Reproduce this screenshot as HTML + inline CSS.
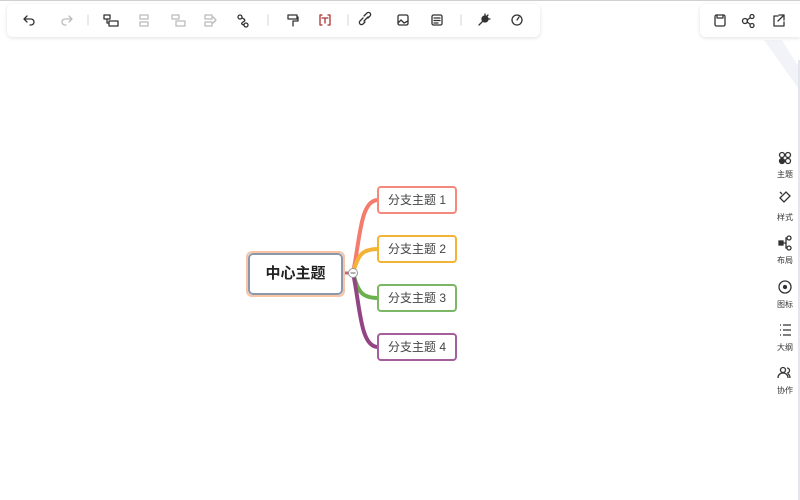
<!DOCTYPE html>
<html><head><meta charset="utf-8"><style>
body{margin:0;width:800px;height:500px;background:#fff;position:relative;overflow:hidden;font-family:"Liberation Sans","Noto Sans CJK SC",sans-serif}
.top{position:absolute;left:0;top:0;width:800px;height:1px;background:#d0d0d0}
.tb{position:absolute;top:4px;height:33px;background:#fff;border-radius:6px;box-shadow:0 1px 4px rgba(0,0,0,.12)}
.node{position:absolute;box-sizing:border-box;background:#fff;border-radius:4px;border:2px solid;font-size:12px;color:#444;text-align:center;line-height:24px;width:80px;height:28px;left:377px}
.side{position:absolute;left:772px;width:26px;text-align:center;font-size:8px;color:#333}
</style></head><body>
<div class="top"></div>
<div style="position:absolute;left:798px;top:60px;width:2px;height:440px;background:#e4e6ee"></div>
<svg style="position:absolute;left:740px;top:36px" width="60" height="60"><path d="M24 4 L58 52 L58 30 L42 4Z" fill="#f2f3f8"/></svg>
<div class="tb" style="left:7px;width:533px">
<svg width="533" height="33" fill="none" stroke="#333" stroke-width="1.3" stroke-linecap="round" stroke-linejoin="round">
<path d="M20 12 L17 15 L20 18 M17 15 H24 a3 3 0 0 1 0 6 H23"/>
<g stroke="#bbb"><path d="M62 12 L65 15 L62 18 M65 15 H58 a3 3 0 0 0 0 6 H59"/></g>
<path d="M81 11v10" stroke="#ddd"/>
<rect x="97" y="11" width="6" height="4"/><rect x="102" y="17" width="9" height="5"/><path d="M100 15v4h2"/>
<g stroke="#bbb"><rect x="133" y="11" width="8" height="4"/><rect x="133" y="18" width="8" height="4"/>
<rect x="165" y="11" width="7" height="4"/><rect x="169" y="17" width="9" height="5"/>
<rect x="198" y="11" width="7" height="4"/><rect x="198" y="18" width="7" height="4"/><path d="M206 13l3 3-3 3"/></g>
<circle cx="233" cy="13" r="2"/><circle cx="239" cy="21" r="2"/><path d="M235 14 Q240 16 236 18 Q233 20 237 21"/>
<path d="M261 11v10" stroke="#ddd"/>
<rect x="281" y="11" width="9" height="4"/><path d="M290 13h1v4h-5v5"/>
<path d="M315 11h-2v10h2 M321 11h2v10h-2 M315 14h6 M318 14v5" stroke="#a33"/>
<path d="M341 11v10" stroke="#ddd"/>
<path d="M358 18l-2 2a2 2 0 0 1-3-3l3-3 M361 14l2-2a2 2 0 0 0-3-3l-3 3 M357 17l4-4"/>
<rect x="391" y="11" width="10" height="10" rx="1.5"/><path d="M391 19l3-3 3 3 4-2"/>
<rect x="425" y="11" width="10" height="10" rx="1.5"/><path d="M427 14h6M427 16.5h6M427 19h4"/>
<path d="M454 11v10" stroke="#ddd"/>
<path d="M472 21l4-4" /><circle cx="478" cy="15" r="3" fill="#333"/><path d="M478 10v2M483 15h-2M481 11l-1 1"/>
<circle cx="510" cy="16" r="5"/><path d="M510 16l2-3"/>
</svg></div>
<div class="tb" style="left:700px;width:100px;border-radius:6px 0 0 6px">
<svg width="100" height="33" fill="none" stroke="#333" stroke-width="1.3" stroke-linecap="round" stroke-linejoin="round">
<rect x="15" y="11" width="10" height="11" rx="1.5"/><path d="M17 11v3h6v-3"/>
<circle cx="45" cy="17" r="2.5"/><circle cx="52" cy="12.5" r="2"/><circle cx="52" cy="21.5" r="2"/><path d="M47 16l3-2M47 18l3 2"/>
<path d="M78 12h-4v10h10v-4 M79 11h5v5 M84 11l-6 6"/>
</svg></div>

<svg style="position:absolute;left:0;top:0" width="800" height="500" fill="none">
<path d="M345 273H352" stroke="#c8628a" stroke-width="3"/>
<path d="M353 273 C360 240 360 200 378 200" stroke="#f47c6c" stroke-width="4"/>
<path d="M353 273 C358 255 362 249 378 249" stroke="#f5b335" stroke-width="4"/>
<path d="M353 273 C358 292 362 298 378 298" stroke="#6ab04c" stroke-width="4"/>
<path d="M353 273 C360 305 360 347 378 347" stroke="#934485" stroke-width="4"/>
<circle cx="353" cy="273" r="4.5" fill="#fff" stroke="#999" stroke-width="1"/><path d="M350.5 273h5" stroke="#666"/>
</svg>
<div style="position:absolute;left:246px;top:251px;width:99px;height:46px;box-sizing:border-box;border:2px solid #f9c3a4;border-radius:6px"></div>
<div style="position:absolute;left:248px;top:253px;width:95px;height:42px;box-sizing:border-box;border:2px solid #8a97ad;border-radius:5px;text-align:center;line-height:38px;font-size:15px;font-weight:bold;color:#222">中心主题</div>
<div class="node" style="top:186px;border-color:#f58a7c">分支主题 1</div>
<div class="node" style="top:235px;border-color:#f5b335">分支主题 2</div>
<div class="node" style="top:284px;border-color:#7bb765">分支主题 3</div>
<div class="node" style="top:333px;border-color:#a45f9c">分支主题 4</div>

<svg style="position:absolute;left:772px;top:148px" width="26" height="240" fill="none" stroke="#333" stroke-width="1.3">
<circle cx="10" cy="7" r="2.5"/><circle cx="16" cy="7" r="2.5"/><circle cx="10" cy="13" r="2.5" fill="#333"/><circle cx="16" cy="13" r="2.5"/>
<path d="M8 50l6-6 4 4-6 6z M10 46l-2-2"/>
<rect x="7" y="93" width="4" height="4" fill="#333"/><circle cx="17" cy="90" r="2"/><circle cx="17" cy="100" r="2"/><path d="M11 95h3v-5h1M14 95v5h1"/>
<circle cx="13" cy="139" r="6"/><circle cx="13" cy="139" r="1.5" fill="#333"/>
<path d="M11 177h8M11 182h8M11 187h8M8 177h1M8 182h1M8 187h1"/>
<circle cx="11" cy="222" r="2.5"/><path d="M6 230c0-3 2-5 5-5s5 2 5 5M15 220a2.5 2.5 0 0 1 0 5M18 230c0-2-1-4-2-4"/>
</svg>
<div class="side" style="top:169px">主题</div>
<div class="side" style="top:212px">样式</div>
<div class="side" style="top:255px">布局</div>
<div class="side" style="top:299px">图标</div>
<div class="side" style="top:342px">大纲</div>
<div class="side" style="top:385px">协作</div>
</body></html>
